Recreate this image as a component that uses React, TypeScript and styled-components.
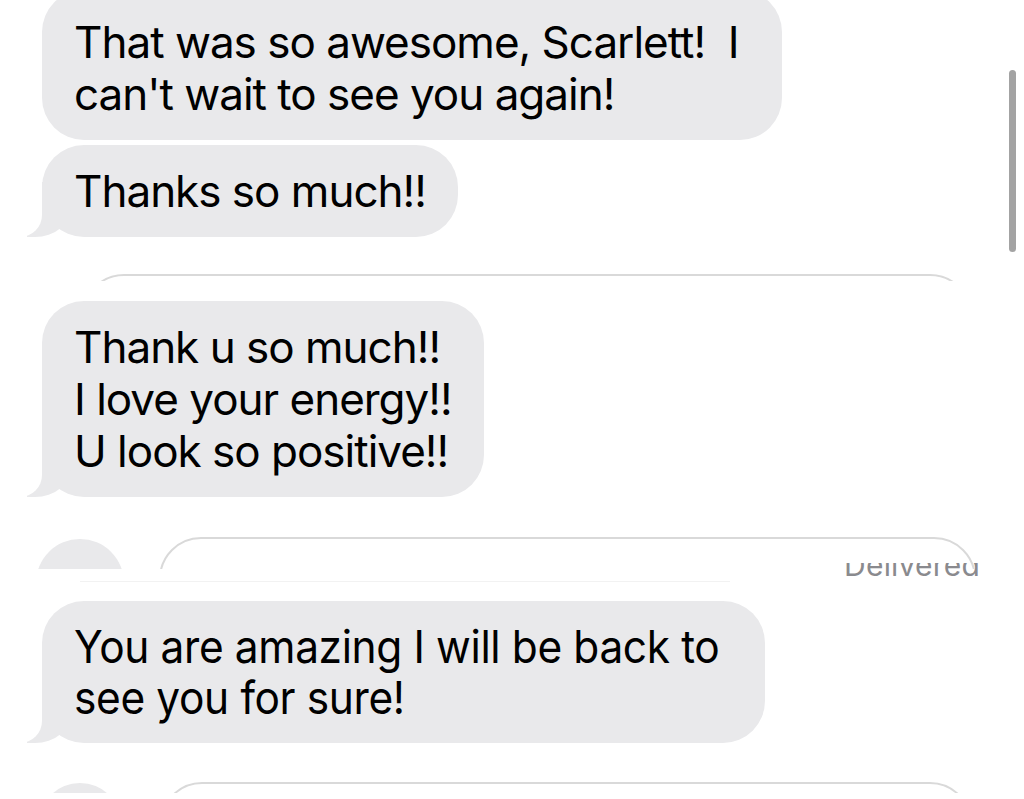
import React from "react";
import styled, { createGlobalStyle } from "styled-components";

const GlobalStyle = createGlobalStyle`
  html, body {
    margin: 0;
    padding: 0;
    background: #ffffff;
  }
  body {
    font-family: Inter, "Liberation Sans", sans-serif;
  }
`;

const Page = styled.div`
  position: relative;
  width: 1024px;
  height: 799px;
  overflow: hidden;
  background: #ffffff;
  display: flex;
  flex-direction: column;
  align-items: flex-start;
`;

const Bubble = styled.div<{ $top: number; $tail?: boolean }>`
  position: relative;
  margin-top: ${(p) => p.$top}px;
  margin-left: 42px;
  padding: 20px 32px;
  background: #e9e9eb;
  border-radius: 42px;
  color: #000000;
  font-size: 44px;
  line-height: 52px;
  letter-spacing: -1px;

  ${(p) =>
    p.$tail &&
    `
    &::before {
      content: "";
      position: absolute;
      bottom: 0;
      left: -15px;
      width: 44px;
      height: 55px;
      background: #e9e9eb;
      border-bottom-right-radius: 36px 30px;
    }
    &::after {
      content: "";
      position: absolute;
      bottom: 0;
      left: -57px;
      width: 57px;
      height: 55px;
      background: #ffffff;
      border-bottom-right-radius: 22px;
    }
  `}
`;

const FirstBubble = styled(Bubble)`
  padding-top: 26px;
  padding-right: 43px;
`;

const Line = styled.span<{ $squeeze?: number }>`
  display: block;
  white-space: pre;
  position: relative;
  z-index: 1;
  transform-origin: left center;
  ${(p) => (p.$squeeze ? `transform: scaleX(${p.$squeeze});` : "")}
`;

/* the last slice comes from a narrower, taller screenshot */
const SqueezedText = styled.div<{ $width: number }>`
  width: ${(p) => p.$width}px;
  font-size: 45.5px;
  line-height: 51px;
  letter-spacing: -0.4px;
`;

const ComposeSlice = styled.div<{ $top: number; $height: number }>`
  position: relative;
  align-self: stretch;
  margin-top: ${(p) => p.$top}px;
  height: ${(p) => p.$height}px;
  overflow: hidden;
  display: flex;
  align-items: flex-start;
`;

const RoundButton = styled.div<{ $left: number; $top: number; $size: number }>`
  flex: none;
  margin-left: ${(p) => p.$left}px;
  margin-top: ${(p) => p.$top}px;
  width: ${(p) => p.$size}px;
  height: ${(p) => p.$size}px;
  border-radius: 50%;
  background: #e9e9eb;
`;

const Field = styled.div<{ $left: number; $right: number; $top: number }>`
  flex: 1;
  box-sizing: border-box;
  margin-left: ${(p) => p.$left}px;
  margin-right: ${(p) => p.$right}px;
  margin-top: ${(p) => p.$top}px;
  height: 84px;
  border: 2px solid #d9d9d9;
  border-radius: 42px;
`;

const DeliveredClip = styled.div`
  align-self: stretch;
  margin-top: -6px;
  height: 18px;
  overflow: hidden;
  display: flex;
  justify-content: flex-end;
  padding-right: 44px;
`;

const DeliveredText = styled.span`
  margin-top: -15px;
  font-size: 30px;
  line-height: 34px;
  color: #8a8a8e;
  letter-spacing: 0.2px;
`;

const Seam = styled.div`
  margin-left: 80px;
  width: 650px;
  height: 1px;
  background: #f2f2f2;
`;

const ScrollThumb = styled.div`
  position: absolute;
  right: 8px;
  top: 70px;
  width: 7px;
  height: 182px;
  border-radius: 4px;
  background: #a3a3a3;
`;

export default function App() {
  return (
    <>
      <GlobalStyle />
      <Page>
        <FirstBubble $top={-10}>
          <Line>{"That was so awesome, Scarlett!  I"}</Line>
          <Line>{"can't wait to see you again!"}</Line>
        </FirstBubble>
        <Bubble $top={5} $tail>
          <Line>Thanks so much!!</Line>
        </Bubble>

        <ComposeSlice $top={34} $height={10}>
          <Field $left={82} $right={52} $top={3} />
        </ComposeSlice>

        <Bubble $top={20} $tail>
          <Line>Thank u so much!!</Line>
          <Line>I love your energy!!</Line>
          <Line>U look so positive!!</Line>
        </Bubble>

        <ComposeSlice $top={40} $height={32}>
          <RoundButton $left={36} $top={2} $size={88} />
          <Field $left={35} $right={48} $top={0} />
        </ComposeSlice>
        <DeliveredClip>
          <DeliveredText>Delivered</DeliveredText>
        </DeliveredClip>
        <Seam />

        <Bubble $top={19} $tail>
          <SqueezedText $width={659}>
            <Line $squeeze={0.933}>You are amazing I will be back to</Line>
            <Line $squeeze={0.933}>see you for sure!</Line>
          </SqueezedText>
        </Bubble>

        <ComposeSlice $top={35} $height={15}>
          <RoundButton $left={39} $top={5} $size={82} />
          <Field $left={39} $right={52} $top={4} />
        </ComposeSlice>

        <ScrollThumb />
      </Page>
    </>
  );
}
